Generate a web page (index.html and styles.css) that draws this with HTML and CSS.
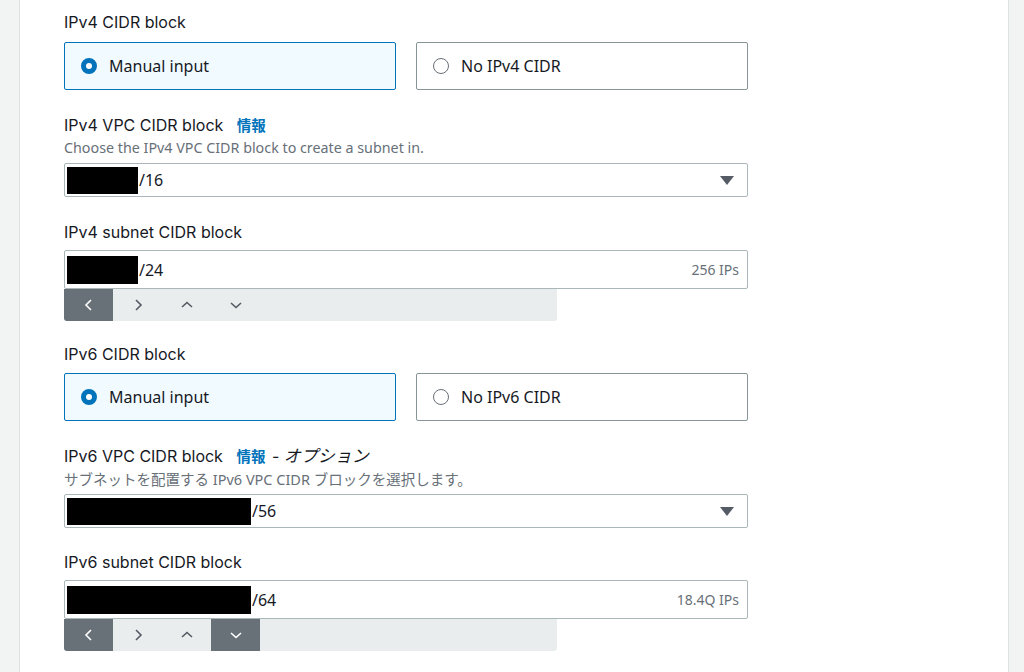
FILE: index.html
```html
<!DOCTYPE html>
<html lang="ja">
<head>
<meta charset="utf-8">
<link rel="stylesheet" href="styles.css">
</head>
<body>
<div class="panel">
  <div class="label">IPv4 CIDR block</div>
  <div class="radio-group">
    <div class="radio-card selected"><span class="radio on"></span><span>Manual input</span></div>
    <div class="radio-card"><span class="radio"></span><span>No IPv4 CIDR</span></div>
  </div>

  <div class="field">
    <div class="label">IPv4 VPC CIDR block <a class="info">情報</a></div>
    <div class="desc">Choose the IPv4 VPC CIDR block to create a subnet in.</div>
    <div class="select">
      <span class="redact short"></span><span class="val">/16</span>
      <svg class="caret" width="14" height="9" viewBox="0 0 14 9"><polygon points="0,0 14,0 7,9" fill="#545b64"/></svg>
    </div>
  </div>

  <div class="field">
    <div class="label">IPv4 subnet CIDR block</div>
    <div class="input">
      <span class="redact short tall"></span><span class="val">/24</span>
      <span class="count">256 IPs</span>
    </div>
    <div class="stepper">
      <span class="step active"><svg width="12" height="14" viewBox="0 0 12 14"><polyline points="8,2 3,7 8,12" fill="none" stroke="currentColor" stroke-width="1.6"/></svg></span>
      <span class="step"><svg width="12" height="14" viewBox="0 0 12 14"><polyline points="4,2 9,7 4,12" fill="none" stroke="currentColor" stroke-width="1.6"/></svg></span>
      <span class="step"><svg width="14" height="12" viewBox="0 0 14 12"><polyline points="2,8 7,3.5 12,8" fill="none" stroke="currentColor" stroke-width="1.6"/></svg></span>
      <span class="step"><svg width="14" height="12" viewBox="0 0 14 12"><polyline points="2,4 7,8.5 12,4" fill="none" stroke="currentColor" stroke-width="1.6"/></svg></span>
    </div>
  </div>

  <div class="section">
    <div class="label">IPv6 CIDR block</div>
    <div class="radio-group">
      <div class="radio-card selected"><span class="radio on"></span><span>Manual input</span></div>
      <div class="radio-card"><span class="radio"></span><span>No IPv6 CIDR</span></div>
    </div>
  </div>

  <div class="field after-section">
    <div class="label">IPv6 VPC CIDR block <a class="info">情報</a> - <i class="opt">オプション</i></div>
    <div class="desc jp">サブネットを配置する IPv6 VPC CIDR ブロックを選択します。</div>
    <div class="select">
      <span class="redact long"></span><span class="val">/56</span>
      <svg class="caret" width="14" height="9" viewBox="0 0 14 9"><polygon points="0,0 14,0 7,9" fill="#545b64"/></svg>
    </div>
  </div>

  <div class="field tight">
    <div class="label">IPv6 subnet CIDR block</div>
    <div class="input">
      <span class="redact long tall"></span><span class="val">/64</span>
      <span class="count">18.4Q IPs</span>
    </div>
    <div class="stepper">
      <span class="step active"><svg width="12" height="14" viewBox="0 0 12 14"><polyline points="8,2 3,7 8,12" fill="none" stroke="currentColor" stroke-width="1.6"/></svg></span>
      <span class="step"><svg width="12" height="14" viewBox="0 0 12 14"><polyline points="4,2 9,7 4,12" fill="none" stroke="currentColor" stroke-width="1.6"/></svg></span>
      <span class="step"><svg width="14" height="12" viewBox="0 0 14 12"><polyline points="2,8 7,3.5 12,8" fill="none" stroke="currentColor" stroke-width="1.6"/></svg></span>
      <span class="step active"><svg width="14" height="12" viewBox="0 0 14 12"><polyline points="2,4 7,8.5 12,4" fill="none" stroke="currentColor" stroke-width="1.6"/></svg></span>
    </div>
  </div>
</div>
</body>
</html>
```
FILE: styles.css
```css
* { box-sizing: border-box; }
html, body { margin: 0; padding: 0; }
body {
  background: #f2f3f3;
  font-family: "Noto Sans", "Noto Sans CJK JP", sans-serif;
  color: #16191f;
  height: 672px;
  overflow: hidden;
}
.panel {
  margin-left: 19px;
  width: 990px;
  height: 672px;
  background: #fff;
  border-left: 1px solid #dde2e2;
  border-right: 1px solid #dde2e2;
  padding: 11px 0 0 44px;
}
.label {
  font-family: "Inter", "Noto Sans CJK JP", sans-serif;
  font-size: 16px;
  line-height: 22px;
  font-weight: 400;
  color: #16191f;
}
.info {
  color: #0073bb;
  font-weight: 700;
  font-size: 14.5px;
  margin-left: 9px;
  margin-right: 2px;
  font-family: "Noto Sans CJK JP", sans-serif;
}
.opt {
  font-family: "Noto Sans CJK JP", sans-serif;
  font-style: italic;
  font-weight: 400;
  font-size: 17px;
}
.radio-group {
  display: grid;
  grid-template-columns: 332px 332px;
  column-gap: 20px;
  margin-top: 9px;
}
.section .radio-group { margin-top: 8px; }
.radio-card {
  height: 48px;
  border: 1px solid #879596;
  border-radius: 2px;
  display: flex;
  align-items: center;
  padding-left: 16px;
  gap: 12px;
  font-size: 16px;
  background: #fff;
}
.radio-card.selected {
  border-color: #0073bb;
  background: #f1faff;
}
.radio {
  width: 16px;
  height: 16px;
  border-radius: 50%;
  border: 1.5px solid #687078;
  background: #fff;
  flex: none;
}
.radio.on {
  border: 5px solid #0073bb;
}
.field { margin-top: 24px; }
.field.after-section { margin-top: 23px; }
.field.tight { margin-top: 23px; }
.section { margin-top: 22px; }
.desc {
  font-size: 14.3px;
  line-height: 18px;
  color: #687078;
  margin-top: 3px;
}
.desc.jp { font-size: 14.5px; }
.select, .input {
  width: 684px;
  border: 1px solid #aab7b8;
  border-radius: 2px;
  display: flex;
  align-items: center;
  padding-left: 2px;
  font-size: 16px;
  background: #fff;
}
.select { height: 34px; margin-top: 6px; }
.input { height: 39px; margin-top: 7px; }
.redact {
  display: block;
  background: #000;
  height: 27px;
  flex: none;
}
.redact.tall { height: 28px; }
.redact.short { width: 71px; }
.redact.long { width: 184px; }
.val { margin-left: 1px; }
.caret { margin-left: auto; margin-right: 13px; }
.count {
  margin-left: auto;
  margin-right: 8px;
  font-size: 14px;
  color: #687078;
}
.stepper {
  width: 493px;
  height: 32px;
  margin-top: 0;
  background: #eaeded;
  border-radius: 0 0 3px 3px;
  display: flex;
  overflow: hidden;
}
.step {
  width: 49px;
  height: 32px;
  display: flex;
  align-items: center;
  justify-content: center;
  color: #545b64;
}
.step.active {
  background: #687078;
  color: #fff;
}
```
